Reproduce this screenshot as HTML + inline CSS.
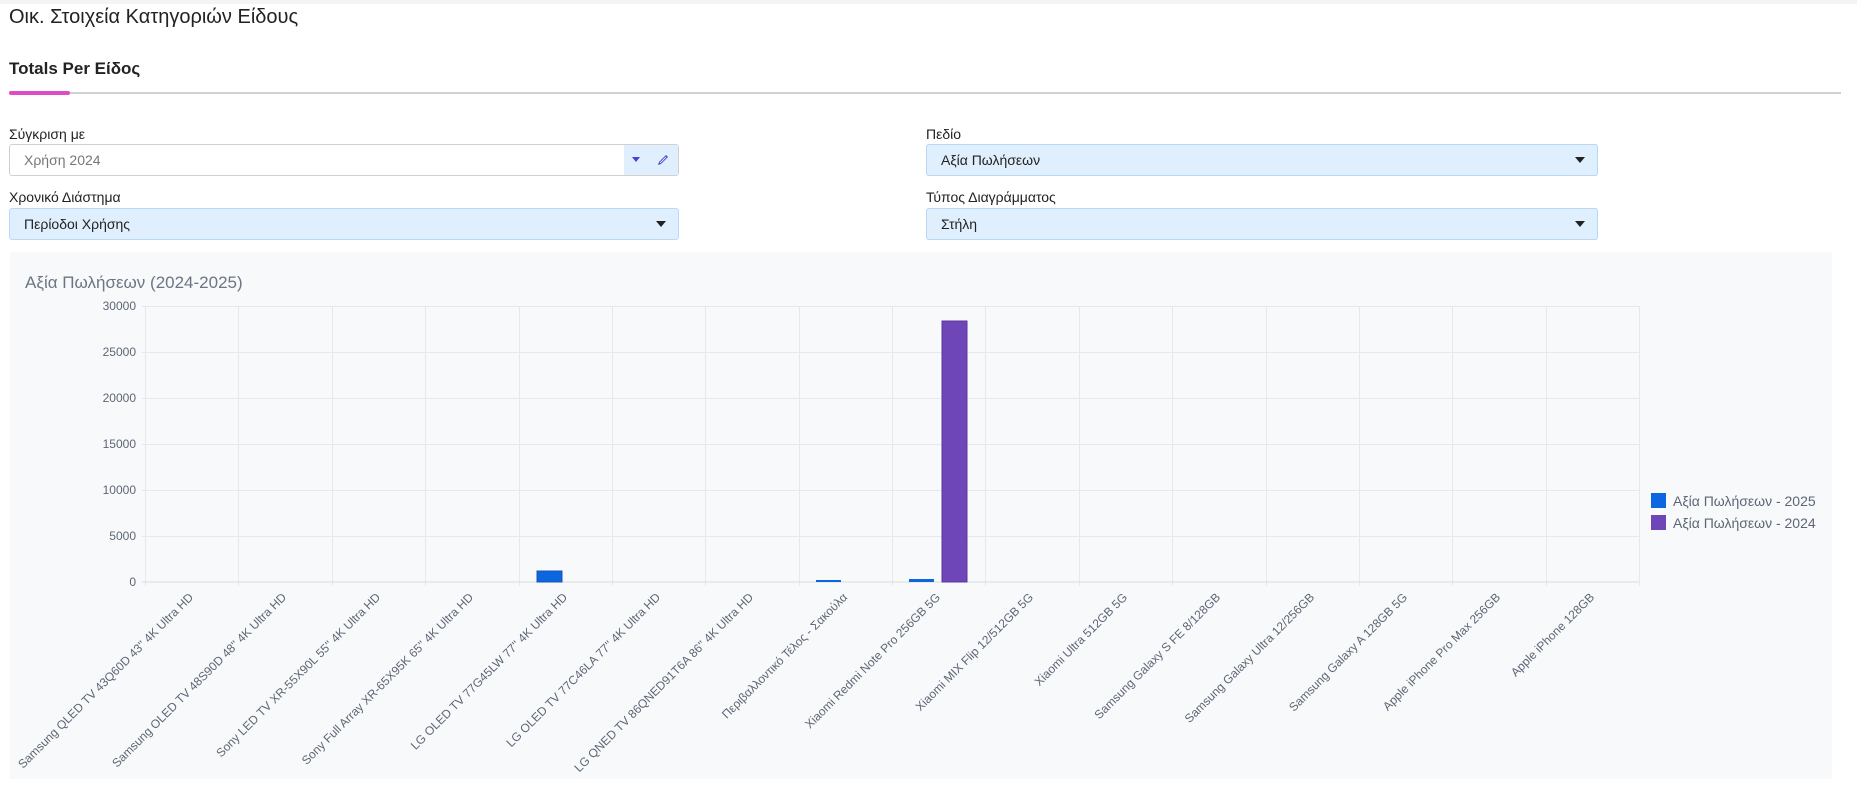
<!DOCTYPE html>
<html><head><meta charset="utf-8"><style>
*{box-sizing:border-box;margin:0;padding:0}
body{width:1857px;height:792px;background:#fff;font-family:"Liberation Sans","DejaVu Sans",sans-serif;color:#222;position:relative;overflow:hidden}
.abs{position:absolute}
.lbl{font-size:14px;color:#222}
.box{position:absolute;height:32px;border:1px solid #b9d8f5;background:#e0effd;border-radius:3px;font-size:14px;padding:0 14px;line-height:30px;color:#222}
.tri{position:absolute;right:12px;top:12px;width:0;height:0;border-left:5px solid transparent;border-right:5px solid transparent;border-top:6px solid #222}
</style></head><body>
<div class="abs" style="left:0;top:0;width:1857px;height:4px;background:#f4f4f4"></div>
<div class="abs" style="left:9px;top:6px;font-size:20px;color:#222">Οικ. Στοιχεία Κατηγοριών Είδους</div>
<div class="abs" style="left:9px;top:59px;font-size:17px;font-weight:bold;color:#222">Totals Per Είδος</div>
<div class="abs" style="left:9px;top:92px;width:1832px;height:2px;background:#d0d0d0"></div>
<div class="abs" style="left:9px;top:91px;width:61px;height:4px;background:#e04cc8;border-radius:2px"></div>

<div class="abs lbl" style="left:9px;top:126px">Σύγκριση με</div>
<div class="abs" style="left:9px;top:144px;width:670px;height:32px;border:1px solid #d0d0d0;border-radius:3px;background:#fff;font-size:14px;color:#777;line-height:30px;padding-left:14px">Χρήση 2024
<div class="abs" style="right:0;top:0;width:54px;height:30px;background:#e0effd"></div>
<div class="abs" style="right:38px;top:12px;width:0;height:0;border-left:4px solid transparent;border-right:4px solid transparent;border-top:5px solid #4a3fd6"></div>
<svg class="abs" style="right:8px;top:8px" width="14" height="14" viewBox="0 0 14 14"><path d="M2 12 L3 9 L10 2 L12 4 L5 11 Z" fill="#4a3fd6"/><path d="M4 10 L10 4" stroke="#e0effd" stroke-width="1"/></svg>
</div>
<div class="abs lbl" style="left:9px;top:189px">Χρονικό Διάστημα</div>
<div class="box" style="left:9px;top:208px;width:670px">Περίοδοι Χρήσης<div class="tri"></div></div>

<div class="abs lbl" style="left:926px;top:126px">Πεδίο</div>
<div class="box" style="left:926px;top:144px;width:672px">Αξία Πωλήσεων<div class="tri"></div></div>
<div class="abs lbl" style="left:926px;top:189px">Τύπος Διαγράμματος</div>
<div class="box" style="left:926px;top:208px;width:672px">Στήλη<div class="tri"></div></div>

<svg class="abs" style="left:0;top:0" width="1857" height="792">
<rect x="10" y="252" width="1822" height="527" fill="#f8f9fb"/>
<text x="25" y="288" font-size="17" fill="#6b7585" font-family="Liberation Sans,sans-serif">Αξία Πωλήσεων (2024-2025)</text>
<g stroke="#e6e8ec" stroke-width="1">
<line x1="142" y1="306.5" x2="1639" y2="306.5"/><line x1="142" y1="352.5" x2="1639" y2="352.5"/><line x1="142" y1="398.5" x2="1639" y2="398.5"/><line x1="142" y1="444.5" x2="1639" y2="444.5"/><line x1="142" y1="490.5" x2="1639" y2="490.5"/><line x1="142" y1="536.5" x2="1639" y2="536.5"/>
<line x1="145.5" y1="306" x2="145.5" y2="586"/><line x1="238.5" y1="306" x2="238.5" y2="586"/><line x1="332.5" y1="306" x2="332.5" y2="586"/><line x1="425.5" y1="306" x2="425.5" y2="586"/><line x1="519.5" y1="306" x2="519.5" y2="586"/><line x1="612.5" y1="306" x2="612.5" y2="586"/><line x1="705.5" y1="306" x2="705.5" y2="586"/><line x1="799.5" y1="306" x2="799.5" y2="586"/><line x1="892.5" y1="306" x2="892.5" y2="586"/><line x1="985.5" y1="306" x2="985.5" y2="586"/><line x1="1079.5" y1="306" x2="1079.5" y2="586"/><line x1="1172.5" y1="306" x2="1172.5" y2="586"/><line x1="1266.5" y1="306" x2="1266.5" y2="586"/><line x1="1359.5" y1="306" x2="1359.5" y2="586"/><line x1="1452.5" y1="306" x2="1452.5" y2="586"/><line x1="1546.5" y1="306" x2="1546.5" y2="586"/><line x1="1639.5" y1="306" x2="1639.5" y2="586"/>
</g>
<line x1="142" y1="582" x2="1639" y2="582" stroke="#d8dbe2"/>
<g font-size="12" fill="#5c6674" text-anchor="end" font-family="Liberation Sans,sans-serif">
<text x="136" y="310">30000</text><text x="136" y="356">25000</text><text x="136" y="402">20000</text><text x="136" y="448">15000</text><text x="136" y="494">10000</text><text x="136" y="540">5000</text><text x="136" y="586">0</text>
</g>
<rect x="537" y="571" width="25" height="11" fill="#0b66e0" stroke="#1a56b0" stroke-width="1"/>
<rect x="816" y="580" width="25" height="2" fill="#0b66e0"/>
<rect x="909" y="579" width="25" height="3" fill="#0b66e0"/>
<rect x="942" y="321" width="25" height="261" fill="#6f46b8" stroke="#5a36a0" stroke-width="1"/>
<rect x="1651" y="493" width="15" height="15" fill="#0b66e0"/>
<rect x="1651" y="515" width="15" height="15" fill="#6f46b8"/>
<g font-size="14" fill="#5c6674" font-family="Liberation Sans,sans-serif">
<text x="1673" y="506">Αξία Πωλήσεων - 2025</text><text x="1673" y="528">Αξία Πωλήσεων - 2024</text>
</g>
<g font-size="12" fill="#5c6674" text-anchor="end" font-family="Liberation Sans,sans-serif">
<text transform="translate(194,598) rotate(-45)">Samsung QLED TV 43Q60D 43'' 4K Ultra HD</text>
<text transform="translate(287,598) rotate(-45)">Samsung OLED TV 48S90D 48'' 4K Ultra HD</text>
<text transform="translate(381,598) rotate(-45)">Sony LED TV XR-55X90L 55'' 4K Ultra HD</text>
<text transform="translate(474,598) rotate(-45)">Sony Full Array XR-65X95K 65'' 4K Ultra HD</text>
<text transform="translate(568,598) rotate(-45)">LG OLED TV 77G45LW 77'' 4K Ultra HD</text>
<text transform="translate(661,598) rotate(-45)">LG OLED TV 77C46LA 77'' 4K Ultra HD</text>
<text transform="translate(754,598) rotate(-45)">LG QNED TV 86QNED91T6A 86'' 4K Ultra HD</text>
<text transform="translate(848,598) rotate(-45)">Περιβαλλοντικό Τέλος - Σακούλα</text>
<text transform="translate(941,598) rotate(-45)">Xiaomi Redmi Note Pro 256GB 5G</text>
<text transform="translate(1034,598) rotate(-45)">Xiaomi MIX Flip 12/512GB 5G</text>
<text transform="translate(1128,598) rotate(-45)">Xiaomi Ultra 512GB 5G</text>
<text transform="translate(1221,598) rotate(-45)">Samsung Galaxy S FE 8/128GB</text>
<text transform="translate(1315,598) rotate(-45)">Samsung Galaxy  Ultra 12/256GB</text>
<text transform="translate(1408,598) rotate(-45)">Samsung Galaxy A 128GB 5G</text>
<text transform="translate(1501,598) rotate(-45)">Apple iPhone Pro Max 256GB</text>
<text transform="translate(1595,598) rotate(-45)">Apple iPhone 128GB</text>
</g>
</svg>
</body></html>
